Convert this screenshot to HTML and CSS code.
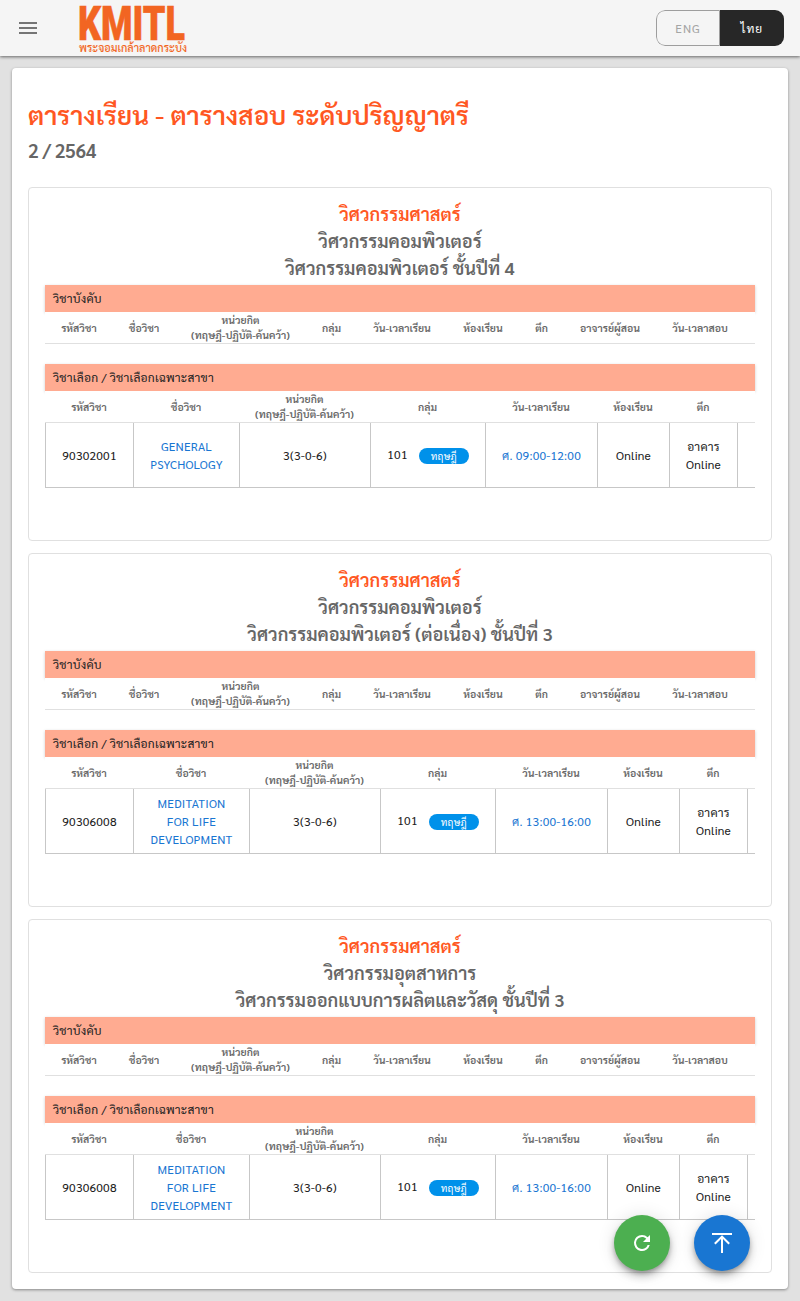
FILE: index.html
```html
<!DOCTYPE html>
<html lang="th">
<head>
<meta charset="utf-8">
<title>KMITL</title>
<link rel="stylesheet" href="styles.css">
</head>
<body>
<header class="topbar">
  <svg class="menu" viewBox="0 0 24 24"><path d="M3 6h18v2H3zM3 11h18v2H3zM3 16h18v2H3z"/></svg>
  <svg class="logo" viewBox="0 0 110 56">
    <text class="logo-main" x="-1" y="39.5" textLength="107" lengthAdjust="spacingAndGlyphs">KMITL</text>
    <text class="logo-sub" x="0" y="51.5" textLength="108" lengthAdjust="spacingAndGlyphs">พระจอมเกล้าลาดกระบัง</text>
  </svg>
  <div class="lang"><button class="eng">ENG</button><button class="thai">ไทย</button></div>
</header>
<main class="sheet">
  <h1>ตารางเรียน - ตารางสอบ ระดับปริญญาตรี</h1>
  <p class="term">2 / 2564</p>

  <section class="card">
    <h2><b>วิศวกรรมศาสตร์</b><span>วิศวกรรมคอมพิวเตอร์</span><span>วิศวกรรมคอมพิวเตอร์ ชั้นปีที่ 4</span></h2>
    <div class="bar">วิชาบังคับ</div>
    <div class="row head empty"><span>รหัสวิชา</span><span>ชื่อวิชา</span><span class="credit">หน่วยกิต<br>(ทฤษฎี-ปฏิบัติ-ค้นคว้า)</span><span>กลุ่ม</span><span>วัน-เวลาเรียน</span><span>ห้องเรียน</span><span>ตึก</span><span>อาจารย์ผู้สอน</span><span>วัน-เวลาสอบ</span></div>
    <div class="bar">วิชาเลือก / วิชาเลือกเฉพาะสาขา</div>
    <div class="row head general"><span>รหัสวิชา</span><span>ชื่อวิชา</span><span class="credit">หน่วยกิต<br>(ทฤษฎี-ปฏิบัติ-ค้นคว้า)</span><span>กลุ่ม</span><span>วัน-เวลาเรียน</span><span>ห้องเรียน</span><span>ตึก</span><span></span></div>
    <div class="row data general"><span>90302001</span><a>GENERAL<br>PSYCHOLOGY</a><span>3(3-0-6)</span><span class="group">101<i>ทฤษฎี</i></span><a>ศ. 09:00-12:00</a><span>Online</span><span>อาคาร<br>Online</span><span></span></div>
  </section>

  <section class="card">
    <h2><b>วิศวกรรมศาสตร์</b><span>วิศวกรรมคอมพิวเตอร์</span><span>วิศวกรรมคอมพิวเตอร์ (ต่อเนื่อง) ชั้นปีที่ 3</span></h2>
    <div class="bar">วิชาบังคับ</div>
    <div class="row head empty"><span>รหัสวิชา</span><span>ชื่อวิชา</span><span class="credit">หน่วยกิต<br>(ทฤษฎี-ปฏิบัติ-ค้นคว้า)</span><span>กลุ่ม</span><span>วัน-เวลาเรียน</span><span>ห้องเรียน</span><span>ตึก</span><span>อาจารย์ผู้สอน</span><span>วัน-เวลาสอบ</span></div>
    <div class="bar">วิชาเลือก / วิชาเลือกเฉพาะสาขา</div>
    <div class="row head meditation"><span>รหัสวิชา</span><span>ชื่อวิชา</span><span class="credit">หน่วยกิต<br>(ทฤษฎี-ปฏิบัติ-ค้นคว้า)</span><span>กลุ่ม</span><span>วัน-เวลาเรียน</span><span>ห้องเรียน</span><span>ตึก</span><span></span></div>
    <div class="row data meditation"><span>90306008</span><a>MEDITATION<br>FOR LIFE<br>DEVELOPMENT</a><span>3(3-0-6)</span><span class="group">101<i>ทฤษฎี</i></span><a>ศ. 13:00-16:00</a><span>Online</span><span>อาคาร<br>Online</span><span></span></div>
  </section>

  <section class="card">
    <h2><b>วิศวกรรมศาสตร์</b><span>วิศวกรรมอุตสาหการ</span><span>วิศวกรรมออกแบบการผลิตและวัสดุ ชั้นปีที่ 3</span></h2>
    <div class="bar">วิชาบังคับ</div>
    <div class="row head empty"><span>รหัสวิชา</span><span>ชื่อวิชา</span><span class="credit">หน่วยกิต<br>(ทฤษฎี-ปฏิบัติ-ค้นคว้า)</span><span>กลุ่ม</span><span>วัน-เวลาเรียน</span><span>ห้องเรียน</span><span>ตึก</span><span>อาจารย์ผู้สอน</span><span>วัน-เวลาสอบ</span></div>
    <div class="bar">วิชาเลือก / วิชาเลือกเฉพาะสาขา</div>
    <div class="row head meditation"><span>รหัสวิชา</span><span>ชื่อวิชา</span><span class="credit">หน่วยกิต<br>(ทฤษฎี-ปฏิบัติ-ค้นคว้า)</span><span>กลุ่ม</span><span>วัน-เวลาเรียน</span><span>ห้องเรียน</span><span>ตึก</span><span></span></div>
    <div class="row data meditation"><span>90306008</span><a>MEDITATION<br>FOR LIFE<br>DEVELOPMENT</a><span>3(3-0-6)</span><span class="group">101<i>ทฤษฎี</i></span><a>ศ. 13:00-16:00</a><span>Online</span><span>อาคาร<br>Online</span><span></span></div>
  </section>
</main>
<nav class="fabs">
  <button class="fab refresh"><svg viewBox="0 0 24 24"><path d="M17.65 6.35A7.96 7.96 0 0 0 12 4a8 8 0 1 0 7.73 10h-2.08A6 6 0 1 1 12 6c1.66 0 3.14.69 4.22 1.78L13 11h7V4z"/></svg></button>
  <button class="fab up"><svg viewBox="0 0 24 24"><path d="M2 2h20v2H2zM11 22h2V8l5.5 5.5 1.42-1.42L12 4.16l-7.92 7.92L5.5 13.5 11 8z"/></svg></button>
</nav>
</body>
</html>
```
FILE: styles.css
```css
* { box-sizing: border-box; }
body { margin: 0; background: #e1e1e1; font-family: Sarabun, "Noto Sans", "Noto Sans Thai", sans-serif; color: #212121; height: 1301px; overflow: hidden; }
button { font: inherit; letter-spacing: inherit; border: 0; padding: 0; }
.topbar { position: relative; height: 56px; display: flex; align-items: center; padding: 0 16px; background: #f5f5f5; box-shadow: 0 1px 3px rgba(0,0,0,.55); }
.menu { width: 24px; height: 24px; fill: #757575; }
.logo { width: 110px; height: 56px; margin-left: 39px; fill: #f26522; overflow: visible; }
.logo-main { font: 900 49px Roboto, sans-serif; stroke: #f26522; stroke-width: .6px; }
.logo-sub { font-size: 11px; font-weight: 500; }
.lang { display: flex; width: 128px; height: 36px; margin-left: auto; border-radius: 9px; overflow: hidden; font-size: 12px; letter-spacing: 1px; }
.eng { width: 64px; border: 1px solid #9e9e9e; border-radius: 9px 0 0 9px; background: #f5f5f5; color: #a5a5a5; }
.thai { width: 64px; background: #272727; color: #fff; }
.sheet { margin: 12px 12px 0; height: 1221px; padding: 27px 16px 0; border-radius: 4px; background: #fff; box-shadow: 0 1px 3px rgba(0,0,0,.4); }
h1 { margin: 0; font-size: 26.15px; line-height: 38px; font-weight: 600; color: #ff5722; white-space: nowrap; }
.term { margin: 3px 0 23px; font-size: 19px; letter-spacing: -.35px; line-height: 28px; font-weight: 600; color: #666; }
.card { height: 354px; margin-bottom: 12px; padding: 12px 16px 0; border: 1px solid #e0e0e0; border-radius: 4px; }
h2 { margin: 0 0 4px; display: flex; flex-direction: column; align-items: center; font-size: 18.15px; line-height: 27px; font-weight: 600; color: #666; white-space: nowrap; }
h2 b { font-weight: 600; color: #ff5722; }
.bar { height: 27px; padding-left: 8px; line-height: 27px; font-size: 12px; letter-spacing: .2px; background: #ffab91; box-shadow: 0 1px 3px rgba(0,0,0,.2); }
.row { display: grid; overflow: hidden; text-align: center; white-space: nowrap; }
.row > * { display: flex; align-items: center; justify-content: center; }
.head { height: 32px; grid-template-rows: 30px; border-bottom: 1px solid #e0e0e0; font-size: 10.5px; line-height: 15px; font-weight: 600; color: #666; background: #fff; position: relative; }
.empty { grid-template-columns: 68px 62px 131px 51px 90px 72px 45px 92px 88px; margin-bottom: 20px; }
.general { grid-template-columns: 88px 106px 131px 115px 112px 72px 68px 18px; }
.meditation { grid-template-columns: 88px 116px 131px 115px 112px 72px 68px 8px; }
.data { height: 65px; border-bottom: 1px solid #c7c7c7; font-size: 12px; line-height: 18px; letter-spacing: .2px; }
.data > * { border-left: 1px solid #c7c7c7; }
.data a { color: #1976d2; }
.data .group { padding-bottom: 2px; }
.group i { width: 50px; height: 16px; margin: 3px 0 0 11px; border-radius: 8px; background: #0091ea; color: #fff; font-style: normal; font-size: 10px; line-height: 16px; }
.fabs { position: fixed; right: 50px; bottom: 30px; display: flex; gap: 24px; }
.fab { width: 56px; height: 56px; display: grid; place-items: center; border-radius: 50%; fill: #fff; box-shadow: 0 3px 5px -1px rgba(0,0,0,.3), 0 6px 10px rgba(0,0,0,.18), 0 1px 18px rgba(0,0,0,.12); }
.refresh { background: #4caf50; }
.refresh svg { width: 24px; height: 24px; }
.up { background: #1976d2; }
.up svg { width: 24px; height: 24px; }
```
